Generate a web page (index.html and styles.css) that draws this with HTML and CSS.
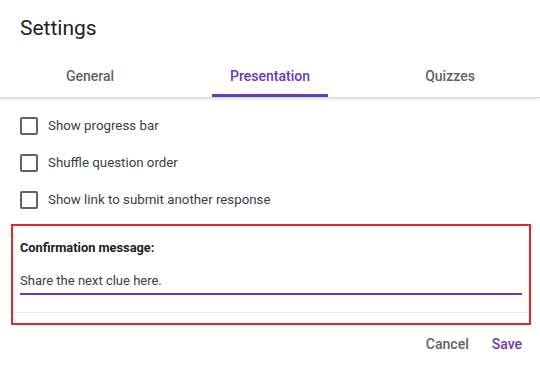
FILE: index.html
```html
<!DOCTYPE html>
<html>
<head>
<meta charset="utf-8">
<link rel="stylesheet" href="styles.css">
</head>
<body>
<div class="dialog">
  <div class="title">Settings</div>
  <div class="tabs">
    <div class="tab"><span class="tab-label">General</span></div>
    <div class="tab active"><span class="tab-label">Presentation</span></div>
    <div class="tab"><span class="tab-label">Quizzes</span></div>
  </div>
  <div class="options">
    <div class="option"><span class="box"></span><span class="opt-text">Show progress bar</span></div>
    <div class="option"><span class="box"></span><span class="opt-text">Shuffle question order</span></div>
    <div class="option"><span class="box"></span><span class="opt-text">Show link to submit another response</span></div>
  </div>
  <div class="confirm">
    <div class="confirm-body">
      <div class="confirm-label">Confirmation message:</div>
      <div class="confirm-input">Share the next clue here.</div>
    </div>
    <div class="confirm-rule"></div>
  </div>
  <div class="actions">
    <span class="btn cancel">Cancel</span>
    <span class="btn save">Save</span>
  </div>
</div>
</body>
</html>
```
FILE: styles.css
```css
html, body {
  margin: 0;
  padding: 0;
  background: #ffffff;
}
.dialog {
  width: 540px;
  height: 372px;
  font-family: Roboto, "Liberation Sans", Arial, sans-serif;
  color: #202124;
  overflow: hidden;
}
.title {
  font-size: 21px;
  line-height: 28px;
  padding: 14px 20px 0;
  color: #202124;
}
.tabs {
  display: flex;
  margin-top: 6px;
  height: 49px;
  box-shadow: 0 1px 0 #d6d6d6, 0 2px 3px rgba(0, 0, 0, 0.12);
}
.tab {
  flex: 1;
  display: flex;
  justify-content: center;
  align-items: flex-end;
  font-size: 14px;
  line-height: 20px;
  font-weight: 500;
  color: #5f6368;
}
.tab-label {
  display: inline-block;
  padding: 0 18px 8px;
  border-bottom: 3px solid transparent;
}
.tab.active .tab-label {
  color: #673ab7;
  border-bottom-color: #673ab7;
  border-radius: 2px 2px 0 0;
}
.options {
  padding: 10px 0 0 20px;
}
.option {
  display: flex;
  align-items: center;
  height: 37px;
}
.box {
  width: 14px;
  height: 14px;
  border: 2px solid #5f6368;
  border-radius: 2px;
  margin-right: 10px;
}
.opt-text {
  font-size: 13.3px;
  line-height: 20px;
  color: #3c4043;
}
.confirm {
  margin: 6px 9px 0 11px;
  border: 2px solid #e3262b;
}
.confirm-body {
  padding: 14px 7px 17px;
}
.confirm-label {
  font-size: 12.8px;
  line-height: 16px;
  font-weight: 700;
  color: #202124;
}
.confirm-input {
  margin-top: 15px;
  font-size: 13px;
  line-height: 20px;
  color: #3c4043;
  padding-bottom: 2px;
  border-bottom: 2px solid #673ab7;
}
.confirm-rule {
  height: 1px;
  background: #e8eaed;
  margin-bottom: 10px;
}
.actions {
  display: flex;
  justify-content: flex-end;
  gap: 23px;
  padding: 9px 18px 0 0;
}
.btn {
  font-size: 14px;
  line-height: 20px;
  font-weight: 500;
}
.cancel {
  color: #5f6368;
}
.save {
  color: #673ab7;
}
```
